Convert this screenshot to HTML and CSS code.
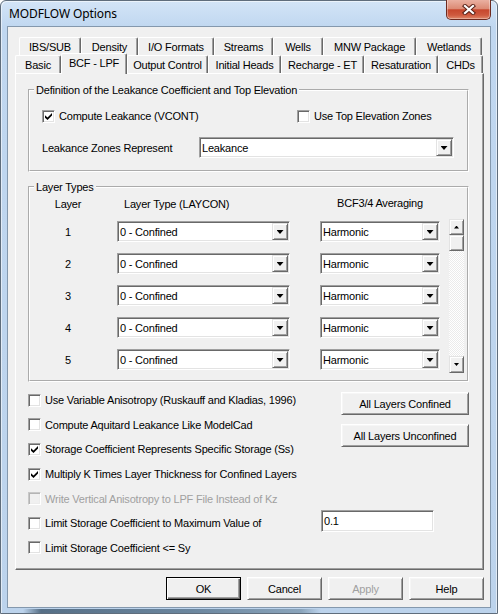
FILE: index.html
```html
<!DOCTYPE html>
<html lang="en">
<head>
<meta charset="utf-8">
<title>MODFLOW Options</title>
<link rel="stylesheet" href="styles.css">
</head>
<body>
<div class="window">
  <div class="titlebar">
    <span class="title">MODFLOW Options</span>
    <button class="close" aria-label="Close">
      <svg width="14" height="11" viewBox="0 0 14 11"><path class="x-shadow" d="M3 2 L11 9 M11 2 L3 9"/><path class="x-mark" d="M3 2 L11 9 M11 2 L3 9"/></svg>
    </button>
  </div>
  <div class="client">
    <div class="tabs">
      <div class="tabrow back">
        <div class="tab tab-ibs">IBS/SUB</div>
        <div class="tab tab-density">Density</div>
        <div class="tab tab-io">I/O Formats</div>
        <div class="tab tab-streams">Streams</div>
        <div class="tab tab-wells">Wells</div>
        <div class="tab tab-mnw">MNW Package</div>
        <div class="tab tab-wetlands">Wetlands</div>
      </div>
      <div class="tabrow front">
        <div class="tab tab-basic">Basic</div>
        <div class="tab tab-bcf active">BCF - LPF</div>
        <div class="tab tab-output">Output Control</div>
        <div class="tab tab-heads">Initial Heads</div>
        <div class="tab tab-recharge">Recharge - ET</div>
        <div class="tab tab-resat">Resaturation</div>
        <div class="tab tab-chd">CHDs</div>
      </div>
    </div>

    <div class="panel">
      <fieldset class="group group-leak">
        <legend>Definition of the Leakance Coefficient and Top Elevation</legend>
        <div class="leak-checks">
          <div class="check"><span class="box"><svg class="tick" width="7" height="7" viewBox="0 0 7 7"><polygon points="0,2.2 2.5,4.6 7,0 7,2.6 2.5,7 0,4.7"/></svg></span>Compute Leakance (VCONT)</div>
          <div class="check"><span class="box"></span>Use Top Elevation Zones</div>
        </div>
        <div class="leak-zones">
          <span class="label">Leakance Zones Represent</span>
          <div class="combo combo-zone"><span class="val">Leakance</span><span class="drop"></span></div>
        </div>
      </fieldset>

      <fieldset class="group group-layers">
        <legend>Layer Types</legend>
        <div class="layer-grid">
          <div class="hd col-num">Layer</div>
          <div class="hd col-type">Layer Type (LAYCON)</div>
          <div class="hd col-avg">BCF3/4 Averaging</div>

          <div class="num col-num">1</div>
          <div class="combo col-type"><span class="val">0 - Confined</span><span class="drop"></span></div>
          <div class="combo col-avg"><span class="val">Harmonic</span><span class="drop"></span></div>

          <div class="num col-num">2</div>
          <div class="combo col-type"><span class="val">0 - Confined</span><span class="drop"></span></div>
          <div class="combo col-avg"><span class="val">Harmonic</span><span class="drop"></span></div>

          <div class="num col-num">3</div>
          <div class="combo col-type"><span class="val">0 - Confined</span><span class="drop"></span></div>
          <div class="combo col-avg"><span class="val">Harmonic</span><span class="drop"></span></div>

          <div class="num col-num">4</div>
          <div class="combo col-type"><span class="val">0 - Confined</span><span class="drop"></span></div>
          <div class="combo col-avg"><span class="val">Harmonic</span><span class="drop"></span></div>

          <div class="num col-num">5</div>
          <div class="combo col-type"><span class="val">0 - Confined</span><span class="drop"></span></div>
          <div class="combo col-avg"><span class="val">Harmonic</span><span class="drop"></span></div>

          <div class="vscroll">
            <span class="sb-btn up"></span>
            <span class="sb-thumb"></span>
            <span class="sb-track"></span>
            <span class="sb-btn down"></span>
          </div>
        </div>
      </fieldset>

      <div class="lower">
        <div class="opts">
          <div class="check"><span class="box"></span>Use Variable Anisotropy (Ruskauff and Kladias, 1996)</div>
          <div class="check"><span class="box"></span>Compute Aquitard Leakance Like ModelCad</div>
          <div class="check"><span class="box"><svg class="tick" width="7" height="7" viewBox="0 0 7 7"><polygon points="0,2.2 2.5,4.6 7,0 7,2.6 2.5,7 0,4.7"/></svg></span>Storage Coefficient Represents Specific Storage (Ss)</div>
          <div class="check"><span class="box"><svg class="tick" width="7" height="7" viewBox="0 0 7 7"><polygon points="0,2.2 2.5,4.6 7,0 7,2.6 2.5,7 0,4.7"/></svg></span>Multiply K Times Layer Thickness for Confined Layers</div>
          <div class="check disabled"><span class="box"></span>Write Vertical Anisotropy to LPF File Instead of Kz</div>
          <div class="check"><span class="box"></span>Limit Storage Coefficient to Maximum Value of</div>
          <div class="check"><span class="box"></span>Limit Storage Coefficient &lt;= Sy</div>
        </div>
        <div class="side">
          <button class="btn btn-wide">All Layers Confined</button>
          <button class="btn btn-wide btn-second">All Layers Unconfined</button>
          <div class="edit">0.1</div>
        </div>
      </div>
    </div>

    <div class="actions">
      <button class="btn btn-dlg btn-default">OK</button>
      <button class="btn btn-dlg">Cancel</button>
      <button class="btn btn-dlg btn-disabled">Apply</button>
      <button class="btn btn-dlg">Help</button>
    </div>
  </div>
</div>
</body>
</html>
```

FILE: styles.css
```css
* { box-sizing: border-box; }

html, body { margin: 0; padding: 0; }

body {
  width: 498px;
  height: 614px;
  overflow: hidden;
  background: #ffffff;
  font-family: "Liberation Sans", Arial, sans-serif;
  font-size: 11px;
  letter-spacing: -0.2px;
  color: #000;
}

/* ---------- window frame ---------- */
.window {
  width: 498px;
  height: 614px;
  border: 1px solid #5f6d7c;
  border-radius: 6px 6px 0 0;
  padding: 0 6px 5px 6px;
  display: flex;
  flex-direction: column;
  background:
    linear-gradient(90deg, transparent 22px, #566f86 40px, #6b869e 190px, #8aa4bb 300px, transparent 320px) left bottom / 100% 4px no-repeat,
    linear-gradient(#d3e4f7, #c0d7f0 26px, #bcd3ec);
  box-shadow: inset 1px 1px 0 rgba(255,255,255,0.55), inset -1px 0 0 rgba(255,255,255,0.55);
}

.titlebar {
  height: 25px;
  display: flex;
  align-items: center;
  justify-content: space-between;
}

.title {
  padding-left: 2px;
  padding-bottom: 1px;
  font-family: "Noto Sans", "Open Sans", sans-serif;
  font-size: 12px;
  letter-spacing: -0.1px;
  color: #000;
}

.close {
  align-self: flex-start;
  margin-top: -1px;
  width: 45px;
  height: 20px;
  padding: 0;
  border: 1px solid #6e2a1f;
  border-top: 0;
  border-radius: 0 0 5px 5px;
  background: linear-gradient(#eab0a1 0%, #dc8b75 45%, #c7472d 52%, #cf5a3f 80%, #e08a6c 100%);
  box-shadow: inset 0 -1px 0 rgba(255,255,255,0.3), inset 1px 0 0 rgba(255,255,255,0.35), inset -1px 0 0 rgba(255,255,255,0.35);
  display: flex;
  align-items: center;
  justify-content: center;
}

.x-shadow { stroke: #5a2218; stroke-width: 4.2; stroke-linecap: square; fill: none; }
.x-mark { stroke: #ffffff; stroke-width: 2.2; stroke-linecap: square; fill: none; }

.client {
  flex: 1;
  border: 1px solid #8498ad;
  background: #f0f0f0;
  display: flex;
  flex-direction: column;
}

/* ---------- tabs ---------- */
.tabs { margin: 10px 6px 0 7px; }

.tabrow { display: flex; height: 18px; }
.tabrow.back { padding-left: 4px; }

.tab {
  height: 18px;
  border: 1px solid;
  border-bottom: 0;
  border-color: #ffffff #696969 #ffffff #ffffff;
  border-radius: 2px 2px 0 0;
  box-shadow: inset -1px 0 0 #a0a0a0;
  background: #f0f0f0;
  display: flex;
  align-items: center;
  justify-content: center;
  white-space: nowrap;
}

.tab.active {
  height: 21px;
  margin-top: -2px;
  margin-bottom: -1px;
  padding-bottom: 3px;
  position: relative;
  z-index: 1;
}

.tab-ibs { width: 62px; }
.tab-density { width: 57px; }
.tab-io { width: 76px; }
.tab-streams { width: 59px; }
.tab-wells { width: 50px; }
.tab-mnw { width: 93px; }
.tab-wetlands { width: 66px; }

.tab-basic { width: 46px; }
.tab-bcf { width: 66px; }
.tab-output { width: 81px; }
.tab-heads { width: 73px; }
.tab-recharge { width: 83px; }
.tab-resat { width: 74px; }
.tab-chd { width: 45px; }

/* ---------- panel ---------- */
.panel {
  margin: 0 6px 0 7px;
  height: 497px;
  border: 1px solid;
  border-color: #ffffff #696969 #696969 #ffffff;
  box-shadow: inset -1px -1px 0 #a0a0a0;
  padding: 9px 14px 0 12px;
}

.group {
  margin: 0;
  min-width: 0;
  border: 2px groove #ffffff;
  padding: 0 0 0 4px;
}

.group legend {
  padding: 0 2px;
  line-height: 14px;
}

.group-leak { padding-bottom: 12px; }
.group-layers { margin-top: 8px; padding-bottom: 10px; }

/* checkbox */
.check {
  display: flex;
  align-items: center;
  height: 14px;
  white-space: nowrap;
}

.box {
  flex: none;
  width: 13px;
  height: 13px;
  margin-right: 4px;
  border: 1px solid;
  border-color: #a0a0a0 #ffffff #ffffff #a0a0a0;
  box-shadow: inset 1px 1px 0 #696969, inset -1px -1px 0 #e3e3e3;
  background: #ffffff;
  display: flex;
  align-items: center;
  justify-content: center;
}

.tick { display: block; fill: #000; }

.check.disabled { color: #a0a0a0; }
.check.disabled .box {
  background: #f0f0f0;
  border-color: #c8c8c8 #ffffff #ffffff #c8c8c8;
  box-shadow: inset 1px 1px 0 #b4b4b4, inset -1px -1px 0 #ececec;
}

.leak-checks {
  display: grid;
  grid-template-columns: 255px auto;
  margin: 12px 0 0 8px;
}

.leak-zones {
  display: grid;
  grid-template-columns: 157px 255px;
  align-items: center;
  margin: 14px 0 0 8px;
}

/* combo box */
.combo {
  display: flex;
  height: 21px;
  padding: 1px;
  background: #ffffff;
  border: 1px solid;
  border-color: #a0a0a0 #ffffff #ffffff #a0a0a0;
  box-shadow: inset 1px 1px 0 #696969, inset -1px -1px 0 #e3e3e3;
}

.combo .val {
  flex: 1;
  display: flex;
  align-items: center;
  padding-left: 1px;
  white-space: nowrap;
}

.drop, .sb-btn {
  flex: none;
  width: 16px;
  border: 1px solid;
  border-color: #e3e3e3 #696969 #696969 #e3e3e3;
  box-shadow: inset 1px 1px 0 #ffffff, inset -1px -1px 0 #a0a0a0;
  background: #f0f0f0;
  display: flex;
  align-items: center;
  justify-content: center;
}

.drop::after, .sb-btn::after {
  content: "";
  width: 7px;
  height: 4px;
  margin-top: 1px;
  background: #000;
  clip-path: polygon(0 0, 100% 0, 50% 100%);
}

.sb-btn::after { width: 5px; height: 3px; margin-top: 0; }
.sb-btn.up::after { clip-path: polygon(50% 0, 100% 100%, 0 100%); }

/* layer grid */
.layer-grid {
  display: grid;
  grid-template-columns: 40px 29px 173px 30px 120px 9px 15px;
  grid-template-rows: 12px repeat(5, 21px);
  row-gap: 11px;
  margin: 4px 0 0 14px;
}

.col-num { grid-column: 1; }
.col-type { grid-column: 3; }
.col-avg { grid-column: 5; }

.hd { line-height: 12px; white-space: nowrap; }
.hd.col-num { text-align: center; }
.hd.col-type { padding-left: 7px; }
.hd.col-avg { text-align: center; margin-top: -1px; }

.num {
  display: flex;
  align-items: center;
  justify-content: center;
  padding-top: 1px;
}

.vscroll {
  grid-column: 7;
  grid-row: 2 / span 5;
  margin: -2px 0 -3px;
  display: flex;
  flex-direction: column;
  background: repeating-conic-gradient(#ffffff 0 25%, #ebebeb 0 50%) 0 0 / 2px 2px;
}

.vscroll .sb-btn { width: 15px; height: 16px; }
.vscroll .sb-btn.down { height: 17px; }

.sb-thumb {
  height: 16px;
  border: 1px solid;
  border-color: #e3e3e3 #696969 #696969 #e3e3e3;
  box-shadow: inset 1px 1px 0 #ffffff, inset -1px -1px 0 #a0a0a0;
  background: #f0f0f0;
}

.sb-track { flex: 1; }

/* lower options */
.lower {
  display: flex;
  justify-content: space-between;
}

.opts { margin-top: 6px; }
.opts .check { height: 24.6px; }

.side {
  width: 148px;
  margin-top: 10px;
  display: flex;
  flex-direction: column;
}

.btn {
  font: inherit;
  letter-spacing: inherit;
  color: #000;
  padding: 0;
  height: 23px;
  background: #f0f0f0;
  border: 1px solid;
  border-color: #ffffff #696969 #696969 #ffffff;
  box-shadow: inset 1px 1px 0 #f6f6f6, inset -1px -1px 0 #a0a0a0;
  white-space: nowrap;
}

.btn-wide { width: 128px; align-self: flex-end; }
.btn-second { margin-top: 9px; }

.edit {
  width: 113px;
  height: 22px;
  margin-top: 63px;
  padding: 0 2px;
  display: flex;
  align-items: center;
  background: #ffffff;
  border: 1px solid;
  border-color: #a0a0a0 #ffffff #ffffff #a0a0a0;
  box-shadow: inset 1px 1px 0 #696969, inset -1px -1px 0 #e3e3e3;
}

/* dialog buttons */
.actions {
  display: flex;
  justify-content: flex-end;
  gap: 6px;
  margin: 7px 6px 0 0;
}

.btn-dlg { width: 75px; }

.btn-default {
  border: 1px solid #000;
  box-shadow: inset 1px 1px 0 #ffffff, inset -1px -1px 0 #696969, inset -2px -2px 0 #a0a0a0;
}

.btn-disabled { color: #a0a0a0; }
```
